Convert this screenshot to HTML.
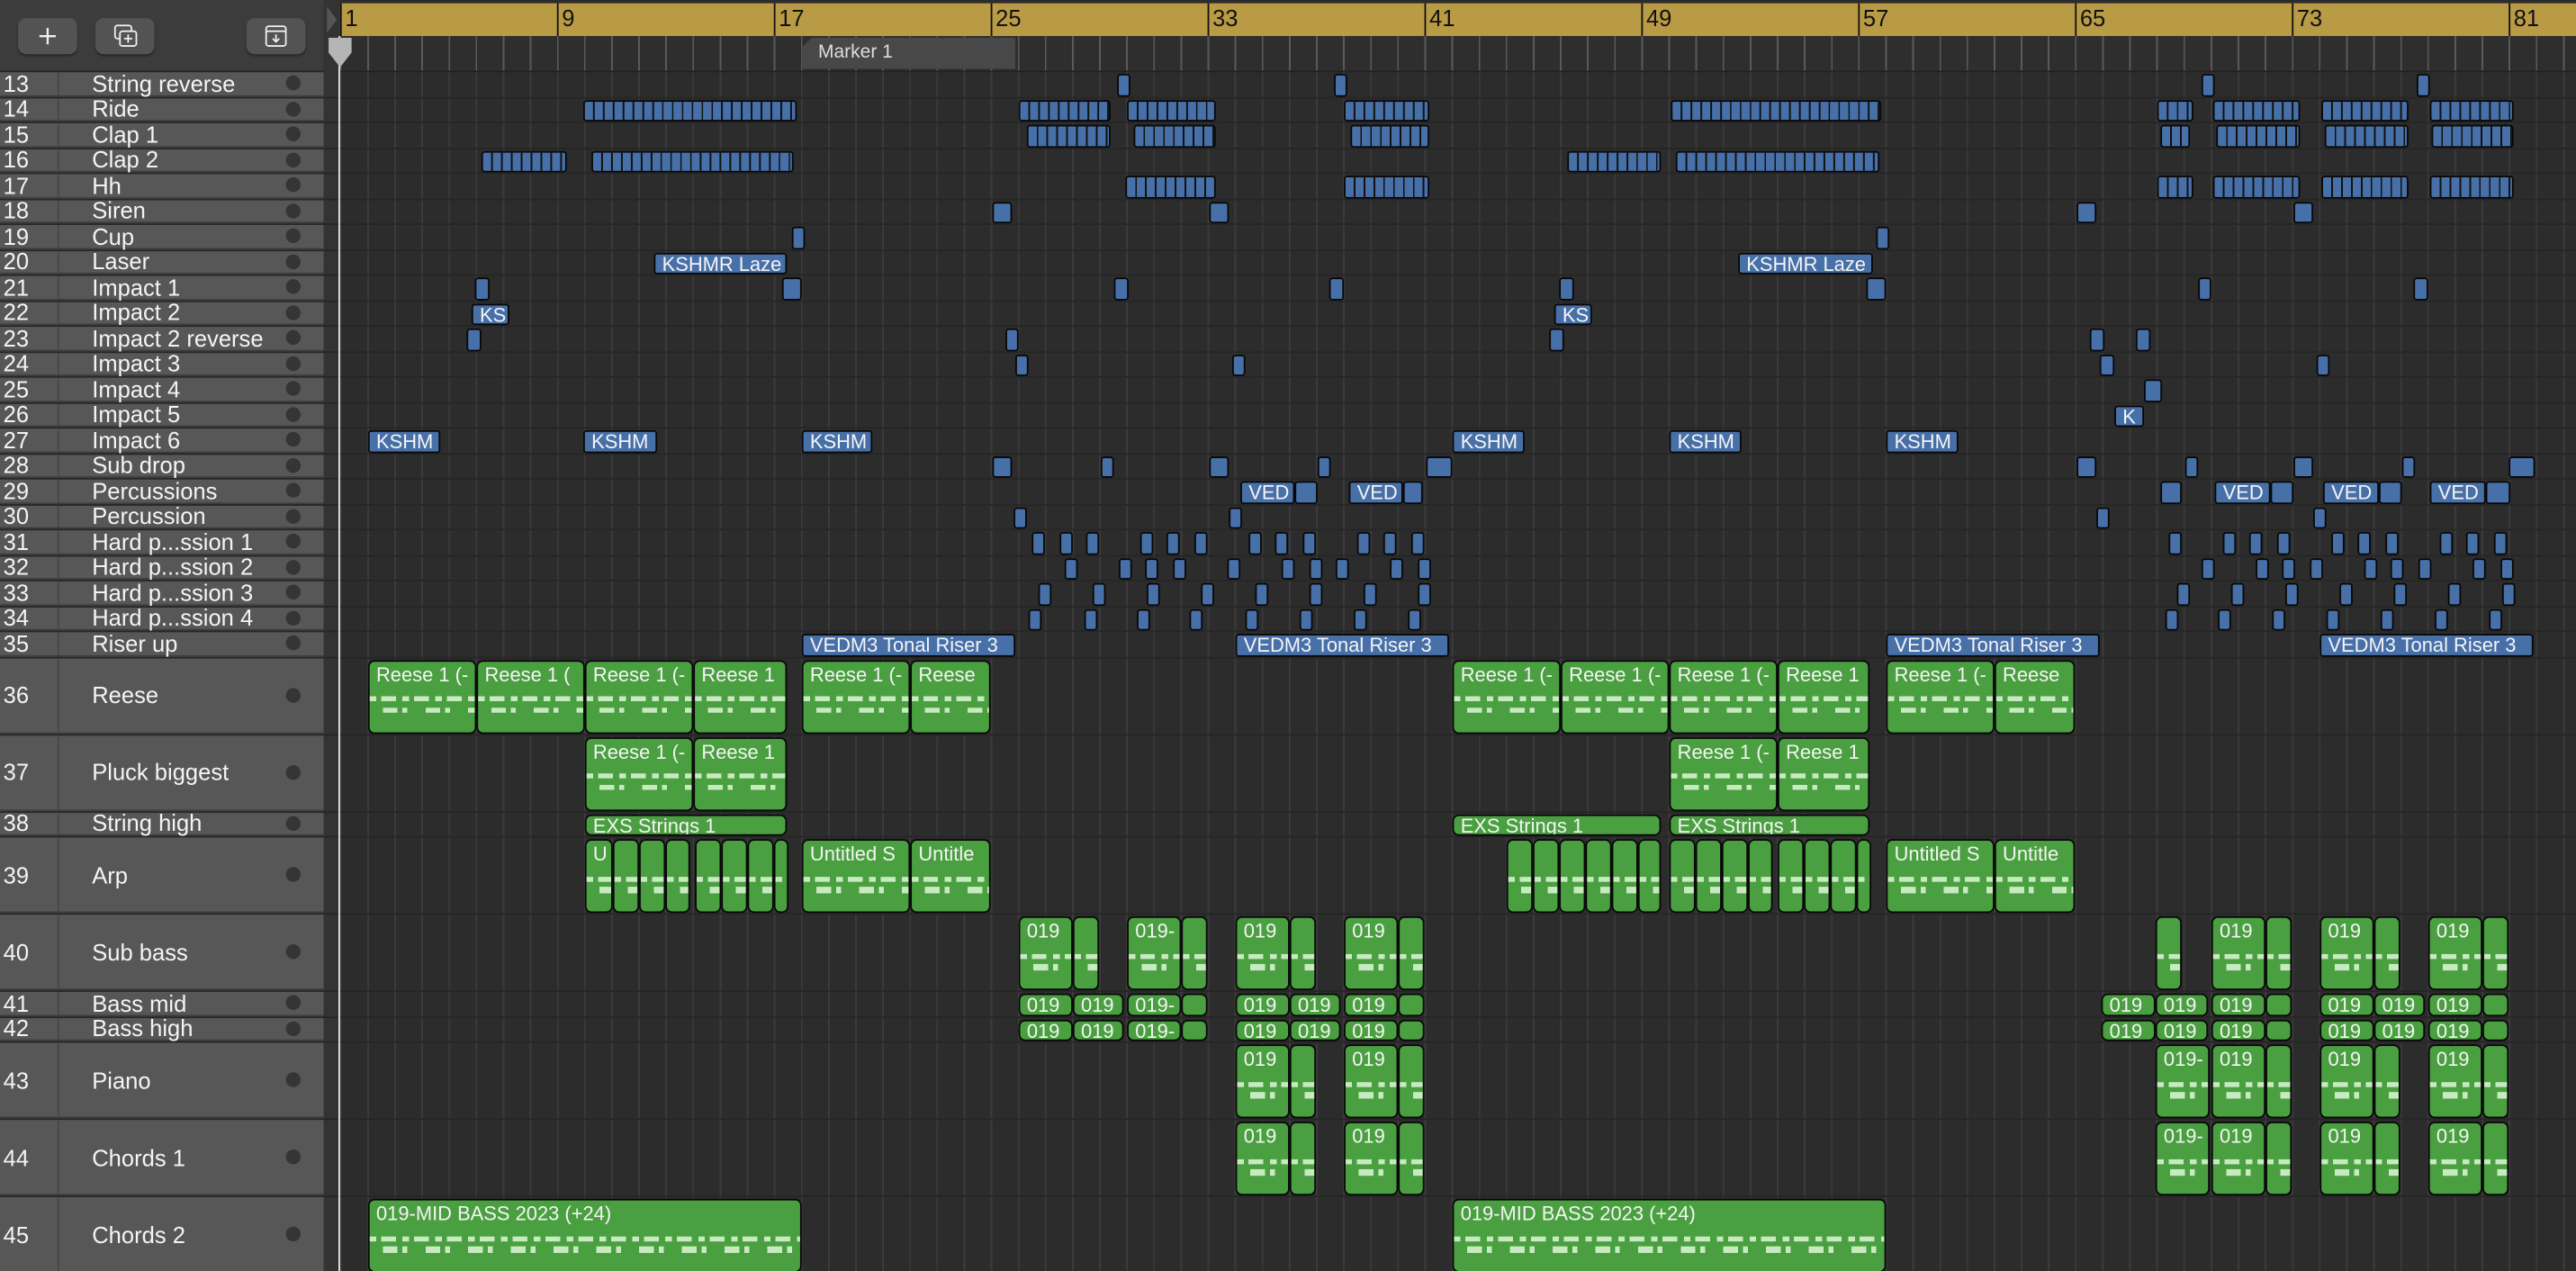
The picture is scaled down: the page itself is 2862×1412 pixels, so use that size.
<!DOCTYPE html>
<html><head><meta charset="utf-8"><style>
html,body{margin:0;padding:0;background:#2c2c2c;overflow:hidden;width:2862px;height:1412px}
#w{position:absolute;left:0;top:0;width:1568px;height:774px;transform:scale(1.8253,1.8243);transform-origin:0 0;font-family:"Liberation Sans",sans-serif;overflow:hidden;background:#2c2c2c}
.lp{position:absolute;left:0;top:0;width:197px;height:44px;background:#3c3c3c;border-bottom:1px solid #242424;box-sizing:border-box}
.btn{position:absolute;top:11px;width:36px;height:22px;background:#535353;border-radius:5px;box-shadow:0 1px 1px #2a2a2a}
.strip{position:absolute;left:197px;top:0;width:10px;height:774px;background:#333}
.ruler{position:absolute;left:207px;top:2px;right:0;height:20px;background:#b99b45}
.ruler span{position:absolute;top:0;height:20px;border-left:1px solid #111;font-size:14px;line-height:19px;padding-left:2px;color:#111}
.upper{position:absolute;left:207px;top:22px;right:0;height:21px;background:#2e2e2e repeating-linear-gradient(90deg,#5a5a5a 0 1px,transparent 1px 16.5px);border-bottom:1px solid #222}
.grid{position:absolute;left:207px;top:44px;right:0;bottom:0;background:repeating-linear-gradient(90deg,#3b3b3b 0 1px,transparent 1px 16.5px)}
.r{position:absolute;left:0;width:1568px;box-sizing:border-box;border-bottom:1px solid #262626}
.h{position:absolute;left:0;top:0;width:197px;height:100%;background:#575757;border-bottom:1px solid #3e3e3e;box-sizing:border-box;color:#f4f4f4;font-size:14px}
.h::before{content:"";position:absolute;left:35px;top:0;bottom:0;border-left:1px solid #484848}
.h .n{position:absolute;left:2px;top:50%;transform:translateY(-50%);font-size:14px}
.h .t{position:absolute;left:56px;top:50%;transform:translateY(-50%);white-space:nowrap}
.h .d{position:absolute;left:174px;top:50%;margin-top:-4.5px;width:9px;height:9px;border-radius:50%;background:#353535}
.r i,.r b{position:absolute;top:1px;bottom:0;background:#4770a8;border:1px solid #080808;border-radius:2px;box-sizing:border-box;font-style:normal;font-weight:normal;color:#f4f4f4;font-size:12px;line-height:12.5px;padding-left:4px;white-space:nowrap;overflow:hidden}
.r .dn{background:#4770a8 repeating-linear-gradient(90deg,transparent 0 5px,#111 5px 6px)}
.r .g{background:#4aa040;border-radius:4px;font-size:12px;line-height:16px}
.r .g::after{content:"";position:absolute;left:0;right:0;top:50%;height:8%;background:repeating-linear-gradient(90deg,#c8eac0 0 4px,transparent 4px 7px,#c8eac0 7px 16px,transparent 16px 20px)}
.r .g::before{content:"";position:absolute;left:3px;right:0;top:66%;height:8%;background:repeating-linear-gradient(90deg,transparent 0 5px,#c8eac0 5px 14px,transparent 14px 17px,#c8eac0 17px 20px,transparent 20px 26px)}
.r .g.s{line-height:13px}
.r .g.s::after,.r .g.s::before{display:none}
.ph{position:absolute;left:206px;top:22px;width:1px;height:752px;background:#e8e8e8}
</style></head><body><div id="w">
<div class="lp">
<div class="btn" style="left:11px"><svg width="36" height="22" viewBox="0 0 36 22"><path d="M18 6v10M13 11h10" stroke="#eee" stroke-width="1.3"/></svg></div>
<div class="btn" style="left:58px"><svg width="36" height="22" viewBox="0 0 36 22"><rect x="12" y="4.5" width="10" height="8" rx="1.5" fill="none" stroke="#eee" stroke-width="1"/><rect x="15" y="8" width="10" height="9" rx="1.5" fill="#535353" stroke="#eee" stroke-width="1"/><path d="M20 10v5M17.5 12.5h5" stroke="#eee" stroke-width="1"/></svg></div>
<div class="btn" style="left:150px"><svg width="36" height="22" viewBox="0 0 36 22"><rect x="12" y="5" width="12" height="12" rx="1.5" fill="none" stroke="#eee" stroke-width="1"/><path d="M12 8h12M18 10v4.5M16 12.5l2 2 2-2" fill="none" stroke="#eee" stroke-width="1"/></svg></div>
</div>
<div class="strip"></div>
<svg style="position:absolute;left:198px;top:2px" width="9" height="20"><path d="M1 2l6 8-6 8z" fill="#555"/></svg>
<div class="ruler">
<span style="left:0">1</span><span style="left:132px">9</span><span style="left:264px">17</span><span style="left:396px">25</span><span style="left:528px">33</span><span style="left:660px">41</span><span style="left:792px">49</span><span style="left:924px">57</span><span style="left:1056px">65</span><span style="left:1188px">73</span><span style="left:1320px">81</span>
</div>
<div class="upper"></div>
<div style="position:absolute;left:488px;top:23px;width:130px;height:19px;background:#484848;clip-path:polygon(6px 0,100% 0,100% 100%,0 100%,0 6px);color:#ddd;font-size:11.5px;line-height:19px;padding-left:10px;box-sizing:border-box">Marker 1</div>
<div class="grid"></div>

<div class="r" style="top:44px;height:15.5px"><div class="h"><span class="n">13</span><span class="t">String reverse</span><span class="d"></span></div><i style="left:680px;width:8px"></i><i style="left:812px;width:8px"></i><i style="left:1340px;width:8px"></i><i style="left:1471px;width:8px"></i></div>
<div class="r" style="top:59.5px;height:15.5px"><div class="h"><span class="n">14</span><span class="t">Ride</span><span class="d"></span></div><i class="dn" style="left:355px;width:130px"></i><i class="dn" style="left:620px;width:56px"></i><i class="dn" style="left:686px;width:54px"></i><i class="dn" style="left:818px;width:52px"></i><i class="dn" style="left:1017px;width:128px"></i><i class="dn" style="left:1313px;width:22px"></i><i class="dn" style="left:1347px;width:53px"></i><i class="dn" style="left:1413px;width:53px"></i><i class="dn" style="left:1479px;width:51px"></i></div>
<div class="r" style="top:75px;height:15.5px"><div class="h"><span class="n">15</span><span class="t">Clap 1</span><span class="d"></span></div><i class="dn" style="left:625px;width:51px"></i><i class="dn" style="left:690px;width:50px"></i><i class="dn" style="left:822px;width:48px"></i><i class="dn" style="left:1315px;width:18px"></i><i class="dn" style="left:1349px;width:51px"></i><i class="dn" style="left:1415px;width:51px"></i><i class="dn" style="left:1480px;width:50px"></i></div>
<div class="r" style="top:90.5px;height:15.5px"><div class="h"><span class="n">16</span><span class="t">Clap 2</span><span class="d"></span></div><i class="dn" style="left:293px;width:52px"></i><i class="dn" style="left:360px;width:123px"></i><i class="dn" style="left:954px;width:57px"></i><i class="dn" style="left:1020px;width:124px"></i></div>
<div class="r" style="top:106px;height:15.5px"><div class="h"><span class="n">17</span><span class="t">Hh</span><span class="d"></span></div><i class="dn" style="left:685px;width:55px"></i><i class="dn" style="left:818px;width:52px"></i><i class="dn" style="left:1313px;width:22px"></i><i class="dn" style="left:1347px;width:53px"></i><i class="dn" style="left:1413px;width:53px"></i><i class="dn" style="left:1479px;width:51px"></i></div>
<div class="r" style="top:121.5px;height:15.5px"><div class="h"><span class="n">18</span><span class="t">Siren</span><span class="d"></span></div><i style="left:604px;width:12px"></i><i style="left:736px;width:12px"></i><i style="left:1264px;width:12px"></i><i style="left:1396px;width:12px"></i></div>
<div class="r" style="top:137px;height:15.5px"><div class="h"><span class="n">19</span><span class="t">Cup</span><span class="d"></span></div><i style="left:482px;width:8px"></i><i style="left:1142px;width:8px"></i></div>
<div class="r" style="top:152.5px;height:15.5px"><div class="h"><span class="n">20</span><span class="t">Laser</span><span class="d"></span></div><b style="left:398px;width:81px">KSHMR Laze</b><b style="left:1058px;width:82px">KSHMR Laze</b></div>
<div class="r" style="top:168px;height:15.5px"><div class="h"><span class="n">21</span><span class="t">Impact 1</span><span class="d"></span></div><i style="left:289px;width:9px"></i><i style="left:476px;width:12px"></i><i style="left:678px;width:9px"></i><i style="left:809px;width:9px"></i><i style="left:949px;width:9px"></i><i style="left:1136px;width:12px"></i><i style="left:1338px;width:8px"></i><i style="left:1469px;width:9px"></i></div>
<div class="r" style="top:183.5px;height:15.5px"><div class="h"><span class="n">22</span><span class="t">Impact 2</span><span class="d"></span></div><b style="left:287px;width:23px">KS</b><b style="left:946px;width:23px">KS</b></div>
<div class="r" style="top:199px;height:15.5px"><div class="h"><span class="n">23</span><span class="t">Impact 2 reverse</span><span class="d"></span></div><i style="left:284px;width:9px"></i><i style="left:612px;width:8px"></i><i style="left:943px;width:9px"></i><i style="left:1272px;width:9px"></i><i style="left:1300px;width:9px"></i></div>
<div class="r" style="top:214.5px;height:15.5px"><div class="h"><span class="n">24</span><span class="t">Impact 3</span><span class="d"></span></div><i style="left:618px;width:8px"></i><i style="left:750px;width:8px"></i><i style="left:1278px;width:9px"></i><i style="left:1410px;width:8px"></i></div>
<div class="r" style="top:230px;height:15.5px"><div class="h"><span class="n">25</span><span class="t">Impact 4</span><span class="d"></span></div><i style="left:1305px;width:11px"></i></div>
<div class="r" style="top:245.5px;height:15.5px"><div class="h"><span class="n">26</span><span class="t">Impact 5</span><span class="d"></span></div><b style="left:1287px;width:18px">K</b></div>
<div class="r" style="top:261px;height:15.5px"><div class="h"><span class="n">27</span><span class="t">Impact 6</span><span class="d"></span></div><b style="left:224px;width:44px">KSHM</b><b style="left:355px;width:45px">KSHM</b><b style="left:488px;width:43px">KSHM</b><b style="left:884px;width:44px">KSHM</b><b style="left:1016px;width:44px">KSHM</b><b style="left:1148px;width:44px">KSHM</b></div>
<div class="r" style="top:276.5px;height:15.5px"><div class="h"><span class="n">28</span><span class="t">Sub drop</span><span class="d"></span></div><i style="left:604px;width:12px"></i><i style="left:670px;width:8px"></i><i style="left:736px;width:12px"></i><i style="left:802px;width:8px"></i><i style="left:868px;width:16px"></i><i style="left:1264px;width:12px"></i><i style="left:1330px;width:8px"></i><i style="left:1396px;width:12px"></i><i style="left:1462px;width:8px"></i><i style="left:1527px;width:16px"></i></div>
<div class="r" style="top:292px;height:15.5px"><div class="h"><span class="n">29</span><span class="t">Percussions</span><span class="d"></span></div><b style="left:755px;width:33px">VED</b><i style="left:788px;width:14px"></i><b style="left:821px;width:33px">VED</b><i style="left:854px;width:12px"></i><i style="left:1315px;width:13px"></i><b style="left:1348px;width:34px">VED</b><i style="left:1382px;width:14px"></i><b style="left:1414px;width:34px">VED</b><i style="left:1448px;width:14px"></i><b style="left:1479px;width:34px">VED</b><i style="left:1513px;width:15px"></i></div>
<div class="r" style="top:307.5px;height:15.5px"><div class="h"><span class="n">30</span><span class="t">Percussion</span><span class="d"></span></div><i style="left:617px;width:8px"></i><i style="left:748px;width:8px"></i><i style="left:1276px;width:8px"></i><i style="left:1408px;width:8px"></i></div>
<div class="r" style="top:323px;height:15.5px"><div class="h"><span class="n">31</span><span class="t">Hard p...ssion 1</span><span class="d"></span></div><i style="left:628px;width:8px"></i><i style="left:645px;width:8px"></i><i style="left:661px;width:8px"></i><i style="left:694px;width:8px"></i><i style="left:710px;width:8px"></i><i style="left:727px;width:8px"></i><i style="left:760px;width:8px"></i><i style="left:776px;width:8px"></i><i style="left:793px;width:8px"></i><i style="left:826px;width:8px"></i><i style="left:842px;width:8px"></i><i style="left:859px;width:8px"></i><i style="left:1320px;width:8px"></i><i style="left:1353px;width:8px"></i><i style="left:1369px;width:8px"></i><i style="left:1386px;width:8px"></i><i style="left:1419px;width:8px"></i><i style="left:1435px;width:8px"></i><i style="left:1452px;width:8px"></i><i style="left:1485px;width:8px"></i><i style="left:1501px;width:8px"></i><i style="left:1518px;width:8px"></i></div>
<div class="r" style="top:338.5px;height:15.5px"><div class="h"><span class="n">32</span><span class="t">Hard p...ssion 2</span><span class="d"></span></div><i style="left:648px;width:8px"></i><i style="left:681px;width:8px"></i><i style="left:697px;width:8px"></i><i style="left:714px;width:8px"></i><i style="left:747px;width:8px"></i><i style="left:780px;width:8px"></i><i style="left:797px;width:8px"></i><i style="left:813px;width:8px"></i><i style="left:846px;width:8px"></i><i style="left:863px;width:8px"></i><i style="left:1340px;width:8px"></i><i style="left:1373px;width:8px"></i><i style="left:1389px;width:8px"></i><i style="left:1406px;width:8px"></i><i style="left:1439px;width:8px"></i><i style="left:1455px;width:8px"></i><i style="left:1472px;width:8px"></i><i style="left:1505px;width:8px"></i><i style="left:1522px;width:8px"></i></div>
<div class="r" style="top:354px;height:15.5px"><div class="h"><span class="n">33</span><span class="t">Hard p...ssion 3</span><span class="d"></span></div><i style="left:632px;width:8px"></i><i style="left:665px;width:8px"></i><i style="left:698px;width:8px"></i><i style="left:731px;width:8px"></i><i style="left:764px;width:8px"></i><i style="left:797px;width:8px"></i><i style="left:830px;width:8px"></i><i style="left:863px;width:8px"></i><i style="left:1325px;width:8px"></i><i style="left:1358px;width:8px"></i><i style="left:1391px;width:8px"></i><i style="left:1424px;width:8px"></i><i style="left:1457px;width:8px"></i><i style="left:1490px;width:8px"></i><i style="left:1523px;width:8px"></i></div>
<div class="r" style="top:369.5px;height:15.5px"><div class="h"><span class="n">34</span><span class="t">Hard p...ssion 4</span><span class="d"></span></div><i style="left:626px;width:8px"></i><i style="left:660px;width:8px"></i><i style="left:692px;width:8px"></i><i style="left:724px;width:8px"></i><i style="left:758px;width:8px"></i><i style="left:791px;width:8px"></i><i style="left:824px;width:8px"></i><i style="left:857px;width:8px"></i><i style="left:1318px;width:8px"></i><i style="left:1350px;width:8px"></i><i style="left:1383px;width:8px"></i><i style="left:1416px;width:8px"></i><i style="left:1449px;width:8px"></i><i style="left:1482px;width:8px"></i><i style="left:1515px;width:8px"></i></div>
<div class="r" style="top:385px;height:15.5px"><div class="h"><span class="n">35</span><span class="t">Riser up</span><span class="d"></span></div><b style="left:488px;width:130px">VEDM3 Tonal Riser 3</b><b style="left:752px;width:130px">VEDM3 Tonal Riser 3</b><b style="left:1148px;width:130px">VEDM3 Tonal Riser 3</b><b style="left:1412px;width:130px">VEDM3 Tonal Riser 3</b></div>

<div class="r" style="top:400.5px;height:47px"><div class="h"><span class="n">36</span><span class="t">Reese</span><span class="d"></span></div><b class="g" style="left:224px;width:66px">Reese 1 (-</b><b class="g" style="left:290px;width:66px">Reese 1 (</b><b class="g" style="left:356px;width:66px">Reese 1 (-</b><b class="g" style="left:422px;width:57px">Reese 1</b><b class="g" style="left:488px;width:66px">Reese 1 (-</b><b class="g" style="left:554px;width:49px">Reese</b><b class="g" style="left:884px;width:66px">Reese 1 (-</b><b class="g" style="left:950px;width:66px">Reese 1 (-</b><b class="g" style="left:1016px;width:66px">Reese 1 (-</b><b class="g" style="left:1082px;width:56px">Reese 1</b><b class="g" style="left:1148px;width:66px">Reese 1 (-</b><b class="g" style="left:1214px;width:49px">Reese</b></div>
<div class="r" style="top:447.5px;height:47px"><div class="h"><span class="n">37</span><span class="t">Pluck biggest</span><span class="d"></span></div><b class="g" style="left:356px;width:66px">Reese 1 (-</b><b class="g" style="left:422px;width:57px">Reese 1</b><b class="g" style="left:1016px;width:66px">Reese 1 (-</b><b class="g" style="left:1082px;width:56px">Reese 1</b></div>
<div class="r" style="top:494.5px;height:15.5px"><div class="h"><span class="n">38</span><span class="t">String high</span><span class="d"></span></div><b class="g s" style="left:356px;width:123px">EXS Strings 1</b><b class="g s" style="left:884px;width:127px">EXS Strings 1</b><b class="g s" style="left:1016px;width:122px">EXS Strings 1</b></div>
<div class="r" style="top:510px;height:47px"><div class="h"><span class="n">39</span><span class="t">Arp</span><span class="d"></span></div><b class="g" style="left:356px;width:17px">U</b><b class="g" style="left:373px;width:16px"></b><b class="g" style="left:389px;width:16px"></b><b class="g" style="left:405px;width:15px"></b><b class="g" style="left:423px;width:16px"></b><b class="g" style="left:439px;width:16px"></b><b class="g" style="left:455px;width:16px"></b><b class="g" style="left:471px;width:9px"></b><b class="g" style="left:488px;width:66px">Untitled S</b><b class="g" style="left:554px;width:49px">Untitle</b><b class="g" style="left:917px;width:16px"></b><b class="g" style="left:933px;width:16px"></b><b class="g" style="left:949px;width:16px"></b><b class="g" style="left:965px;width:16px"></b><b class="g" style="left:981px;width:16px"></b><b class="g" style="left:997px;width:14px"></b><b class="g" style="left:1016px;width:16px"></b><b class="g" style="left:1032px;width:16px"></b><b class="g" style="left:1048px;width:16px"></b><b class="g" style="left:1064px;width:15px"></b><b class="g" style="left:1082px;width:16px"></b><b class="g" style="left:1098px;width:16px"></b><b class="g" style="left:1114px;width:16px"></b><b class="g" style="left:1130px;width:9px"></b><b class="g" style="left:1148px;width:66px">Untitled S</b><b class="g" style="left:1214px;width:49px">Untitle</b></div>
<div class="r" style="top:557px;height:47px"><div class="h"><span class="n">40</span><span class="t">Sub bass</span><span class="d"></span></div><b class="g" style="left:620px;width:33px">019</b><b class="g" style="left:653px;width:16px"></b><b class="g" style="left:686px;width:33px">019-</b><b class="g" style="left:719px;width:16px"></b><b class="g" style="left:752px;width:33px">019</b><b class="g" style="left:785px;width:16px"></b><b class="g" style="left:818px;width:33px">019</b><b class="g" style="left:851px;width:16px"></b><b class="g" style="left:1312px;width:16px"></b><b class="g" style="left:1346px;width:33px">019</b><b class="g" style="left:1379px;width:16px"></b><b class="g" style="left:1412px;width:33px">019</b><b class="g" style="left:1445px;width:16px"></b><b class="g" style="left:1478px;width:33px">019</b><b class="g" style="left:1511px;width:16px"></b></div>
<div class="r" style="top:604px;height:15.5px"><div class="h"><span class="n">41</span><span class="t">Bass mid</span><span class="d"></span></div><b class="g s" style="left:620px;width:33px">019</b><b class="g s" style="left:653px;width:31px">019</b><b class="g s" style="left:686px;width:33px">019-</b><b class="g s" style="left:719px;width:16px"></b><b class="g s" style="left:752px;width:33px">019</b><b class="g s" style="left:785px;width:31px">019</b><b class="g s" style="left:818px;width:33px">019</b><b class="g s" style="left:851px;width:16px"></b><b class="g s" style="left:1279px;width:33px">019</b><b class="g s" style="left:1312px;width:32px">019</b><b class="g s" style="left:1346px;width:33px">019</b><b class="g s" style="left:1379px;width:16px"></b><b class="g s" style="left:1412px;width:33px">019</b><b class="g s" style="left:1445px;width:31px">019</b><b class="g s" style="left:1478px;width:33px">019</b><b class="g s" style="left:1511px;width:16px"></b></div>
<div class="r" style="top:619.5px;height:15.5px"><div class="h"><span class="n">42</span><span class="t">Bass high</span><span class="d"></span></div><b class="g s" style="left:620px;width:33px">019</b><b class="g s" style="left:653px;width:31px">019</b><b class="g s" style="left:686px;width:33px">019-</b><b class="g s" style="left:719px;width:16px"></b><b class="g s" style="left:752px;width:33px">019</b><b class="g s" style="left:785px;width:31px">019</b><b class="g s" style="left:818px;width:33px">019</b><b class="g s" style="left:851px;width:16px"></b><b class="g s" style="left:1279px;width:33px">019</b><b class="g s" style="left:1312px;width:32px">019</b><b class="g s" style="left:1346px;width:33px">019</b><b class="g s" style="left:1379px;width:16px"></b><b class="g s" style="left:1412px;width:33px">019</b><b class="g s" style="left:1445px;width:31px">019</b><b class="g s" style="left:1478px;width:33px">019</b><b class="g s" style="left:1511px;width:16px"></b></div>
<div class="r" style="top:635px;height:47px"><div class="h"><span class="n">43</span><span class="t">Piano</span><span class="d"></span></div><b class="g" style="left:752px;width:33px">019</b><b class="g" style="left:785px;width:16px"></b><b class="g" style="left:818px;width:33px">019</b><b class="g" style="left:851px;width:16px"></b><b class="g" style="left:1312px;width:33px">019-</b><b class="g" style="left:1346px;width:33px">019</b><b class="g" style="left:1379px;width:16px"></b><b class="g" style="left:1412px;width:33px">019</b><b class="g" style="left:1445px;width:16px"></b><b class="g" style="left:1478px;width:33px">019</b><b class="g" style="left:1511px;width:16px"></b></div>
<div class="r" style="top:682px;height:47px"><div class="h"><span class="n">44</span><span class="t">Chords 1</span><span class="d"></span></div><b class="g" style="left:752px;width:33px">019</b><b class="g" style="left:785px;width:16px"></b><b class="g" style="left:818px;width:33px">019</b><b class="g" style="left:851px;width:16px"></b><b class="g" style="left:1312px;width:33px">019-</b><b class="g" style="left:1346px;width:33px">019</b><b class="g" style="left:1379px;width:16px"></b><b class="g" style="left:1412px;width:33px">019</b><b class="g" style="left:1445px;width:16px"></b><b class="g" style="left:1478px;width:33px">019</b><b class="g" style="left:1511px;width:16px"></b></div>
<div class="r" style="top:729px;height:47px"><div class="h"><span class="n">45</span><span class="t">Chords 2</span><span class="d"></span></div><b class="g" style="left:224px;width:264px">019-MID BASS 2023 (+24)</b><b class="g" style="left:884px;width:264px">019-MID BASS 2023 (+24)</b></div>

<div class="ph"></div>
<svg style="position:absolute;left:198px;top:22px" width="18" height="20"><path d="M2 1h14v9l-7 9-7-9z" fill="#b5b5b5"/></svg>
</div></body></html>
